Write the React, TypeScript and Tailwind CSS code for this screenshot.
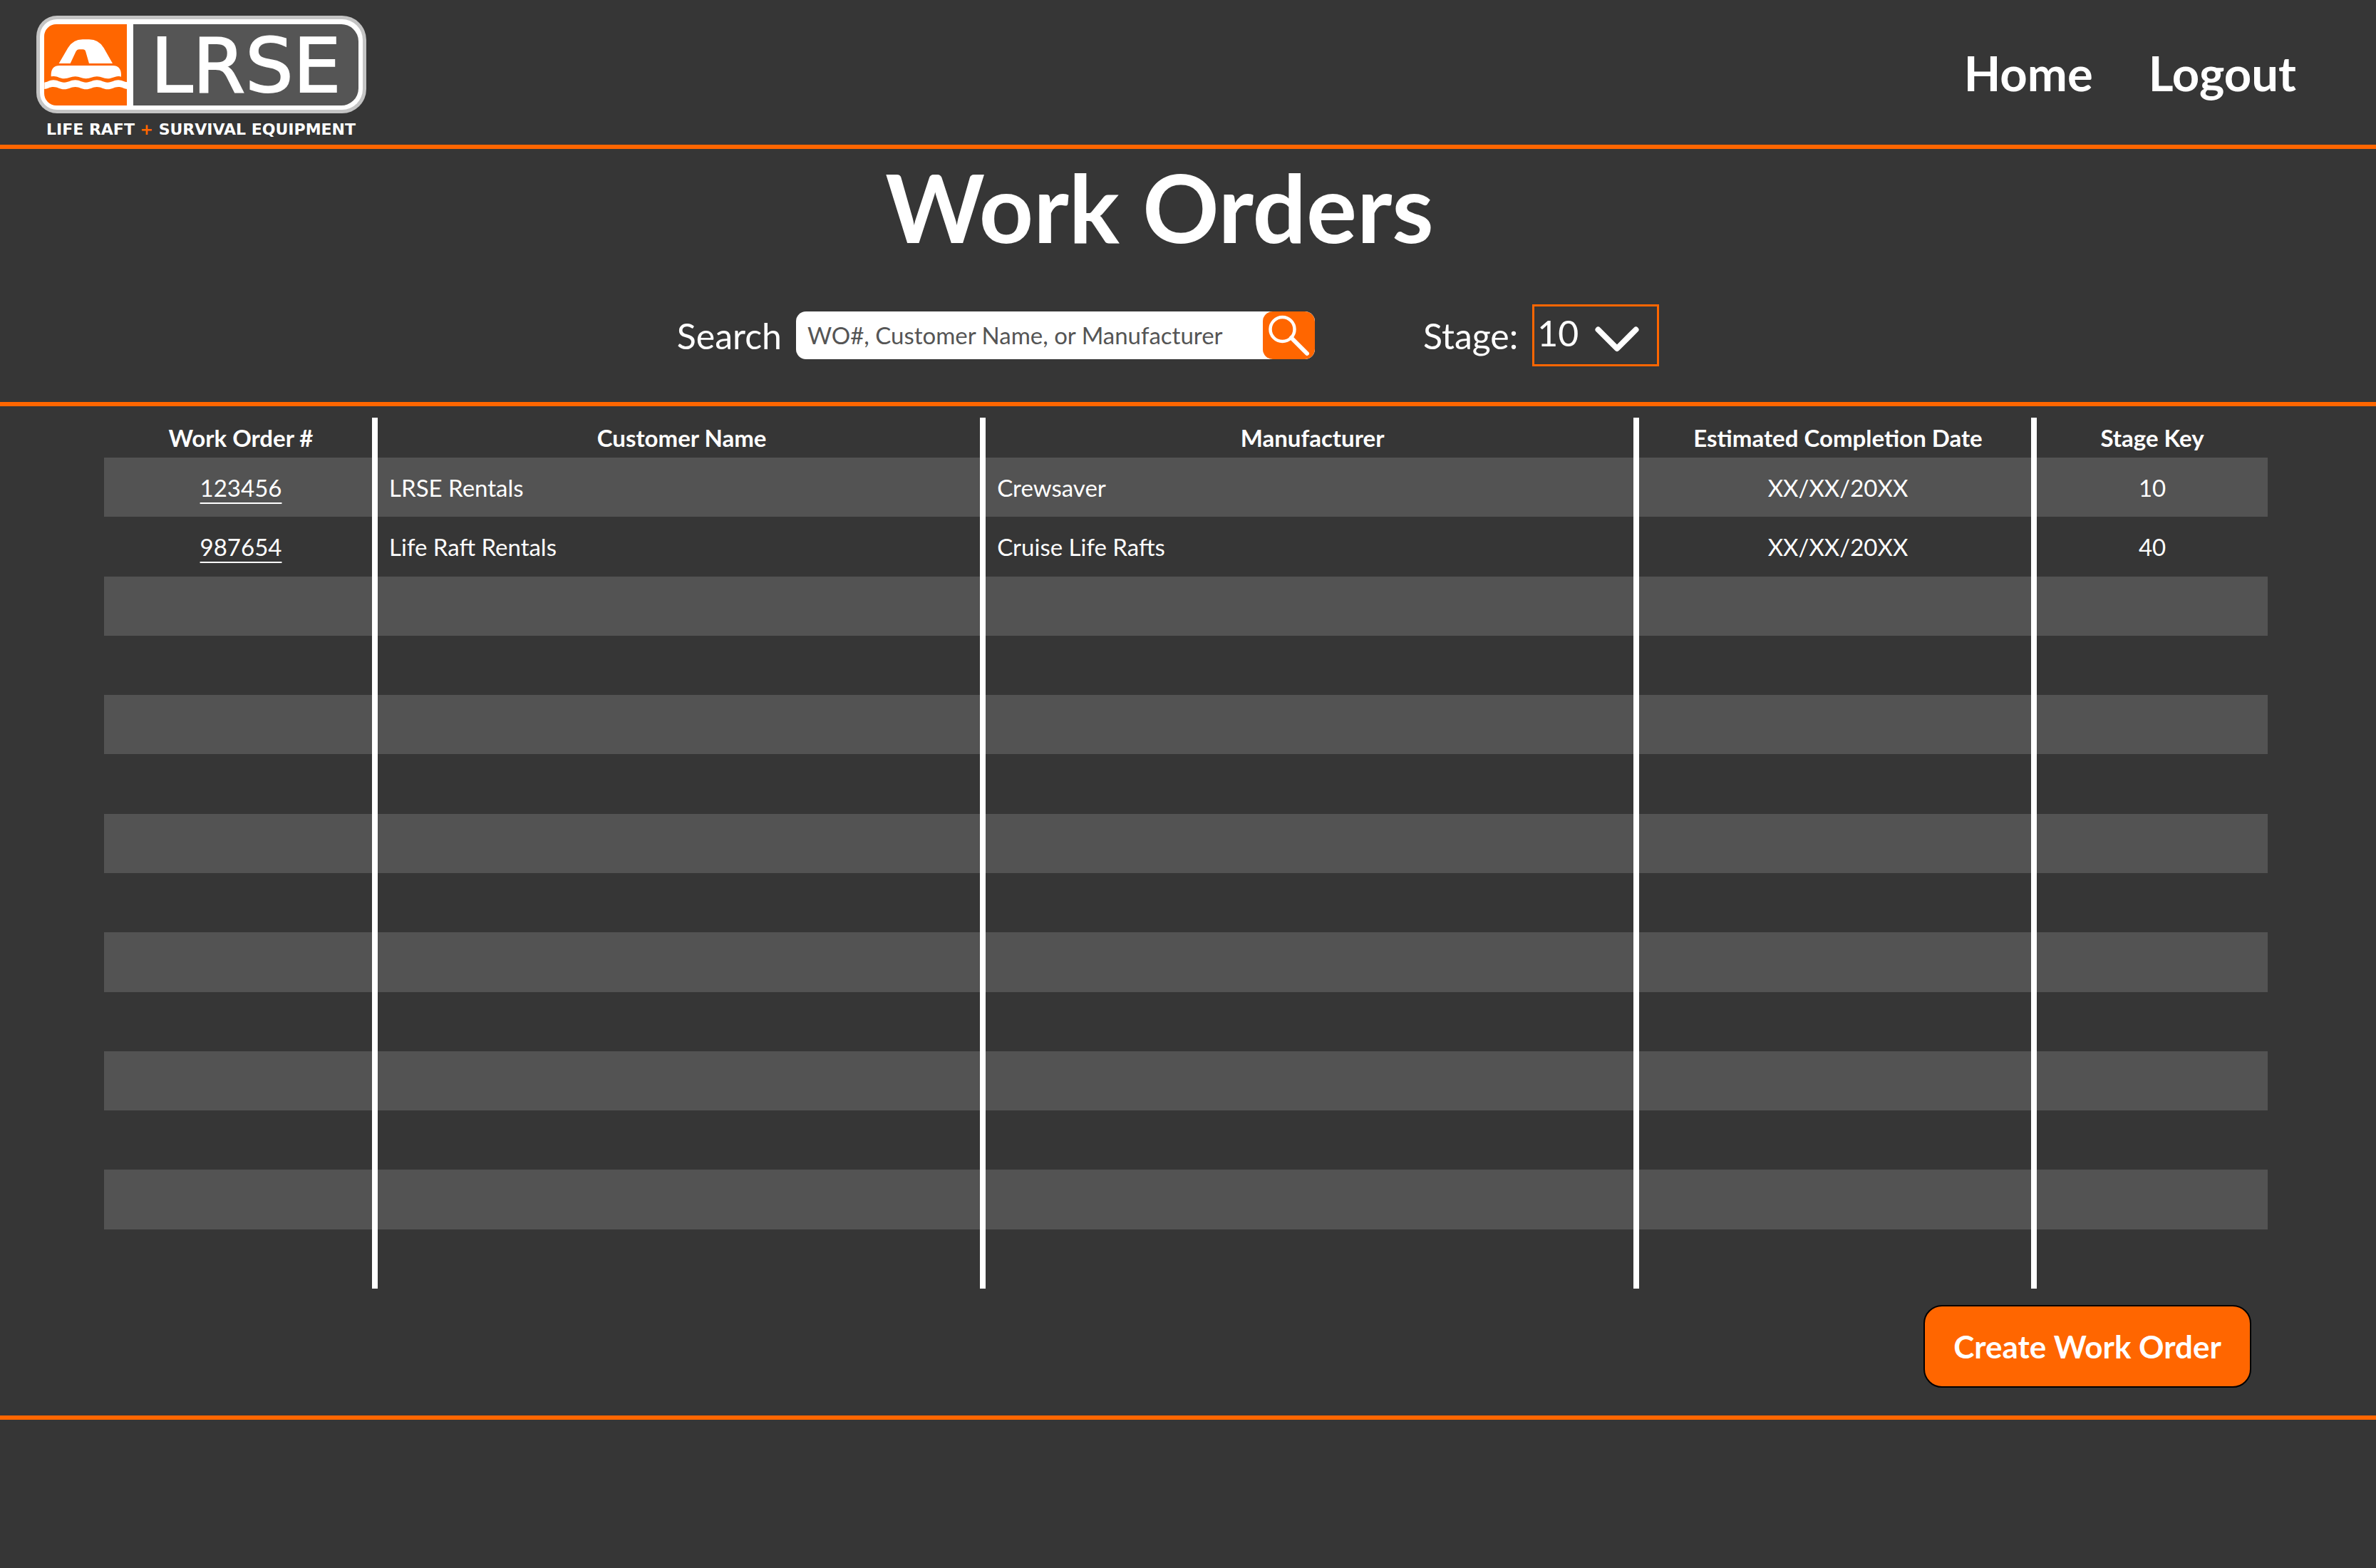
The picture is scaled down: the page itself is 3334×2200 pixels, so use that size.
import { useState } from "react";

type WorkOrder = {
  id: string;
  customer: string;
  manufacturer: string;
  completion: string;
  stage: string;
};

const ORDERS: WorkOrder[] = [
  { id: "123456", customer: "LRSE Rentals", manufacturer: "Crewsaver", completion: "XX/XX/20XX", stage: "10" },
  { id: "987654", customer: "Life Raft Rentals", manufacturer: "Cruise Life Rafts", completion: "XX/XX/20XX", stage: "40" },
];

const ROW_COUNT = 14;
const STAGES = ["10", "20", "30", "40"];

function Logo() {
  return (
    <svg viewBox="0 0 463 176" className="h-[176px] w-[463px]" role="img" aria-label="LRSE Life Raft + Survival Equipment">
      <path d="M29 0H429A34 34 0 0 1 463 34V103A34 34 0 0 1 429 137H29A29 29 0 0 1 0 108V29A29 29 0 0 1 29 0Z" fill="#c4c4c4" />
      <path d="M29 5H429A29 29 0 0 1 458 34V103A29 29 0 0 1 429 132H29A24 24 0 0 1 5 108V29A24 24 0 0 1 29 5Z" fill="#fff" />
      <path d="M28 12H127V126H28A17 17 0 0 1 11 109V29A17 17 0 0 1 28 12Z" fill="#f60" />
      <path d="M136 12H427A24 24 0 0 1 452 36V102A24 24 0 0 1 427 126H136Z" fill="#555" />
      <g transform="translate(-21 -22) scale(0.3333)" fill="#fff">
        <path d="M158 267L196 202Q217 166 258 166H285Q326 166 347 202L384 267H285L271 218Q268 208 259 208H242Q234 208 230 216L206 267Z" />
        <path d="M125 322V312Q127 276 160 276H385Q418 276 420 312V323Q414 320 408 321C390 322 382 331 363 331C345 331 337 322 318 322C300 322 290 331 272 331C254 331 245 322 227 322C208 322 199 331 180 331C162 331 152 320 135 321Q130 321 125 322Z" />
        <path d="M97 347C110 346 118 337 135 337C153 337 162 347 180 347C199 347 208 337 227 337C245 337 254 347 272 347C290 347 300 337 318 337C337 337 345 347 363 347C382 347 390 337 408 337C425 337 433 346 446 346V375C433 374 425 366 408 366C390 366 382 376 363 376C345 376 337 366 318 366C300 366 290 376 272 376C254 376 245 366 227 366C208 366 199 376 180 376C162 376 153 366 135 366C118 366 110 374 97 375Z" />
      </g>
      <text x="294" y="107" textAnchor="middle" fill="#fff" stroke="#fff" strokeWidth="2" fontSize="106" fontFamily="'DejaVu Sans', sans-serif">
        LRSE
      </text>
      <text x="231" y="167" textAnchor="middle" fill="#fff" fontSize="22" fontWeight="700" fontFamily="'DejaVu Sans', sans-serif">
        LIFE RAFT <tspan fill="#f60">+</tspan> SURVIVAL EQUIPMENT
      </text>
    </svg>
  );
}

function SearchIcon() {
  return (
    <svg viewBox="0 0 73 67" className="h-[67px] w-[73px]" fill="none" stroke="#fff" aria-hidden="true">
      <circle cx="27.5" cy="25" r="17" strokeWidth="4.5" />
      <path d="M40 37L62 59" strokeWidth="6" strokeLinecap="round" />
    </svg>
  );
}

function SearchBox() {
  const [query, setQuery] = useState("");
  return (
    <form className="flex items-center gap-5" onSubmit={(e) => e.preventDefault()}>
      <label htmlFor="search" className="text-[50px] leading-[60px]">
        Search
      </label>
      <div className="flex h-[67px] w-[728px] overflow-hidden rounded-[14px] bg-white">
        <input
          id="search"
          type="text"
          value={query}
          onChange={(e) => setQuery(e.target.value)}
          placeholder="WO#, Customer Name, or Manufacturer"
          className="min-w-0 flex-1 bg-transparent pl-4 text-[33px] text-[#555] outline-none placeholder:text-[#555]"
        />
        <button type="submit" aria-label="Search" className="rounded-[14px] bg-[#ff6600]">
          <SearchIcon />
        </button>
      </div>
    </form>
  );
}

function StageFilter() {
  const [stage, setStage] = useState("10");
  return (
    <div className="flex items-center gap-5">
      <label htmlFor="stage" className="text-[50px] leading-[60px]">
        Stage:
      </label>
      <div className="relative">
        <select
          id="stage"
          value={stage}
          onChange={(e) => setStage(e.target.value)}
          className="block h-[87px] w-[178px] appearance-none border-3 border-[#ff6600] bg-transparent pb-2 pl-1 text-[50px] leading-[60px] outline-none"
        >
          {STAGES.map((s) => (
            <option key={s} value={s} className="bg-[#363636]">
              {s}
            </option>
          ))}
        </select>
        <svg
          viewBox="0 0 62 36"
          className="pointer-events-none absolute top-[31px] right-7 h-9 w-[62px]"
          fill="none"
          stroke="#fff"
          strokeWidth="8"
          strokeLinecap="round"
          strokeLinejoin="round"
          aria-hidden="true"
        >
          <path d="M4.500 4.500L31 31L57.500 4.500" />
        </svg>
      </div>
    </div>
  );
}

function OrdersTable() {
  const rows = Array.from({ length: ROW_COUNT }, (_, i) => ORDERS[i]);
  return (
    <table className="h-[1222px] w-full table-fixed border-separate border-spacing-0 text-[33px] leading-10">
      <colgroup>
        <col className="w-[12.65%]" />
        <col className="w-[28.1%]" />
        <col className="w-[30.2%]" />
        <col className="w-[18.38%]" />
        <col />
      </colgroup>
      <thead>
        <tr className="h-14 font-bold [&>th]:border-white [&>th:not(:last-child)]:border-r-8 [&>th:not(:last-child)]:pl-2">
          <th scope="col">Work Order #</th>
          <th scope="col">Customer Name</th>
          <th scope="col">Manufacturer</th>
          <th scope="col">Estimated Completion Date</th>
          <th scope="col">Stage Key</th>
        </tr>
      </thead>
      <tbody>
        {rows.map((order, i) => (
          <tr key={i} className="h-[83px] odd:bg-[#535353] [&>td]:border-white [&>td:not(:last-child)]:border-r-8">
            <td className="pl-2 text-center">
              {order && (
                <a href={`#${order.id}`} className="underline decoration-2 underline-offset-8">
                  {order.id}
                </a>
              )}
            </td>
            <td className="pl-4">{order?.customer}</td>
            <td className="pl-4">{order?.manufacturer}</td>
            <td className="pl-2 text-center">{order?.completion}</td>
            <td className="text-center">{order?.stage}</td>
          </tr>
        ))}
      </tbody>
    </table>
  );
}

export default function App() {
  return (
    <div className="min-h-screen bg-[#363636] font-['Lato',sans-serif] text-white">
      <header className="flex h-[209px] items-center justify-between border-b-6 border-[#ff6600] pr-28 pl-[51px]">
        <div className="self-start pt-[22px]">
          <Logo />
        </div>
        <nav className="flex gap-[78px] text-[67px] leading-[80px] font-bold">
          <a href="#home">Home</a>
          <a href="#logout">Logout</a>
        </nav>
      </header>

      <section className="border-b-6 border-[#ff6600] pb-[50px]">
        <h1 className="pr-20 text-center text-[133px] leading-[162px] font-bold">Work Orders</h1>
        <div className="flex items-center justify-center gap-[152px] pt-14 pr-14">
          <SearchBox />
          <StageFilter />
        </div>
      </section>

      <main className="border-b-6 border-[#ff6600] pt-4 pr-[152px] pb-[39px] pl-[146px]">
        <OrdersTable />
        <div className="flex justify-end pt-[23px] pr-[23px]">
          <button
            type="button"
            className="h-[116px] rounded-[26px] border-2 border-black bg-[#ff6600] px-10 text-[44px] leading-[54px] font-bold"
          >
            Create Work Order
          </button>
        </div>
      </main>
    </div>
  );
}
